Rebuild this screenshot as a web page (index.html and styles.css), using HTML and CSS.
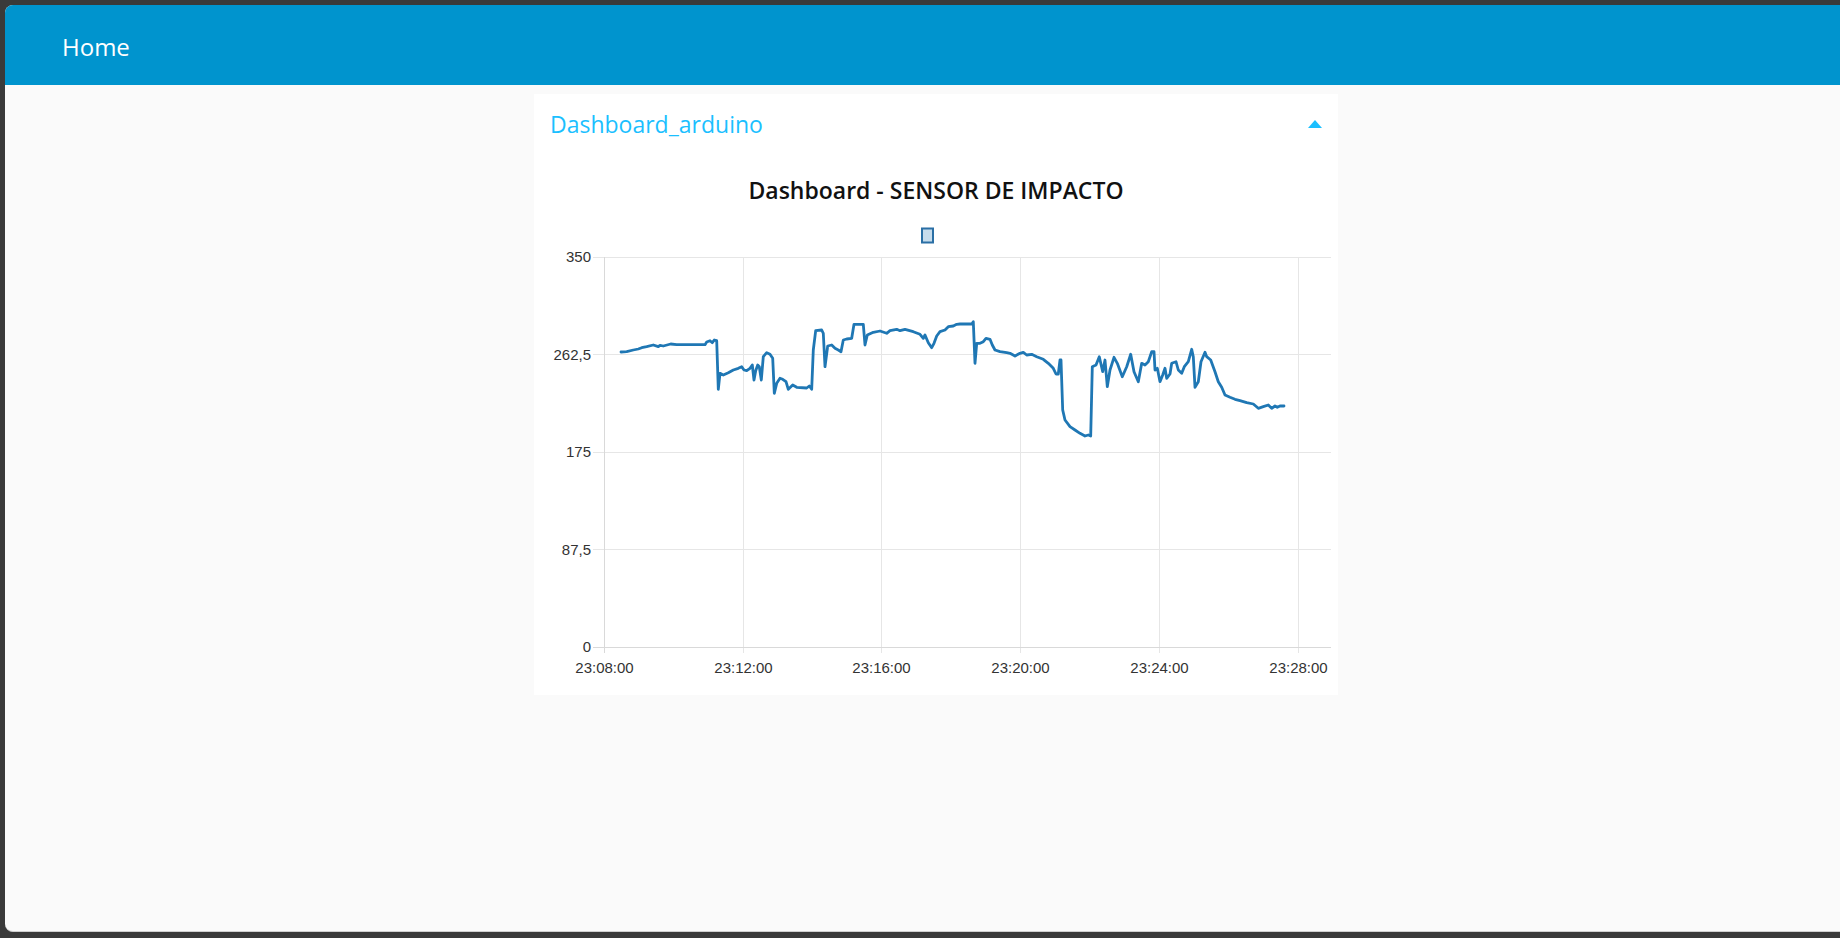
FILE: index.html
```html
<!DOCTYPE html>
<html lang="es">
<head>
<meta charset="utf-8">
<title>Node-RED Dashboard</title>
<link rel="stylesheet" href="styles.css">
</head>
<body>
<div class="window">
  <header class="toolbar"><h1 class="toolbar-title">Home</h1></header>
  <main class="content">
    <section class="card">
      <div class="card-head">
        <span class="card-title">Dashboard_arduino</span>
        <svg class="caret" width="14" height="8" viewBox="0 0 14 8"><polygon points="0,8 14,8 7,0" fill="#1bbfff"/></svg>
      </div>
      <div class="chart-title">Dashboard - SENSOR DE IMPACTO</div>
      <svg class="chart" width="804" height="491" viewBox="534 204 804 491">
        <rect x="922" y="228.5" width="11" height="14" fill="#c6dcec" stroke="#2a6fa5" stroke-width="2"/>
        <g stroke="#e6e6e6" stroke-width="1">
          <line x1="593" y1="257.5" x2="1331" y2="257.5"/>
          <line x1="593" y1="354.5" x2="1331" y2="354.5"/>
          <line x1="593" y1="452.5" x2="1331" y2="452.5"/>
          <line x1="593" y1="549.5" x2="1331" y2="549.5"/>
          <line x1="743.5" y1="257" x2="743.5" y2="653"/>
          <line x1="881.5" y1="257" x2="881.5" y2="653"/>
          <line x1="1020.5" y1="257" x2="1020.5" y2="653"/>
          <line x1="1159.5" y1="257" x2="1159.5" y2="653"/>
          <line x1="1298.5" y1="257" x2="1298.5" y2="653"/>
        </g>
        <g stroke="#d9d9d9" stroke-width="1">
          <line x1="604.5" y1="257" x2="604.5" y2="653"/>
          <line x1="593" y1="647.5" x2="1331" y2="647.5"/>
        </g>
        <g class="ylab" text-anchor="end">
          <text x="591" y="262">350</text>
          <text x="591" y="360">262,5</text>
          <text x="591" y="457">175</text>
          <text x="591" y="555">87,5</text>
          <text x="591" y="652">0</text>
        </g>
        <g class="xlab" text-anchor="middle">
          <text x="604.5" y="673">23:08:00</text>
          <text x="743.5" y="673">23:12:00</text>
          <text x="881.5" y="673">23:16:00</text>
          <text x="1020.5" y="673">23:20:00</text>
          <text x="1159.5" y="673">23:24:00</text>
          <text x="1298.5" y="673">23:28:00</text>
        </g>
        <polyline fill="none" stroke="#1f77b4" stroke-width="2.8" stroke-linejoin="round" stroke-linecap="round" points="621,352 626.7,351.7 633.3,350 638.3,349 641.7,347.7 646.7,346.7 653.3,345 658.3,346.7 660,345.3 663.3,346 670.7,344 676.7,344.7 705,344.7 706.7,342 710,340.7 712.3,342.7 714.3,340 716.7,340.7 718.3,389.3 720,373.3 723.3,375 728.3,372.7 733.3,370 738.3,368.3 741.7,366.7 744,370 746.7,370.7 750,368.3 752.3,365 754,380 755.7,370.7 757.7,365 759.3,366.7 761.3,380 763.3,356.7 766.7,352.7 770,354.3 772.7,358.3 774.3,393.3 776.7,383.3 780,378.3 782.7,379.3 786,381.7 788.3,389.3 792.7,385 796.7,387.3 806.7,388 809.3,386 811.7,389.3 813.3,350 815.7,330.7 821.7,330 823.3,333.3 825,366.7 827.7,346 831.7,345 835,348.3 838.3,350 841,351.7 843.3,340 846.7,339 851.7,338.3 854,324.3 863.3,324.3 865,345 867.3,335 873.3,332.3 880,331 886.7,333.3 890,330.7 896.7,329.3 900,330.7 905,329.3 913.3,331.7 920,334.3 923.3,338.3 925,335 928.3,342.7 931.7,347.7 934,343.3 936.7,336 940,331.7 945,330 948.3,326.7 953.3,326 956.7,324.3 960,324 971.7,324 973.3,321.7 975,363.3 976.7,343.3 980,343.3 983.3,341.7 986,338.3 990,339.3 992.3,345 995,350 1000,351.7 1006.7,352.7 1010,353.3 1015,356 1020,353.3 1023.3,352.3 1026.7,355 1031.7,354.3 1036.7,356.7 1043.3,359.3 1048.3,363.3 1053.3,368.3 1056,374 1058.3,374 1060,360 1061,360 1062.7,410 1065,420 1070,426.7 1075,430 1080,433.3 1085,436 1088.3,435 1090.7,436 1092.3,366.7 1096,365 1099.3,356.7 1102.7,371.7 1105,360 1107.3,386.7 1110,370 1114,357.3 1117.3,363.3 1122.3,376.7 1126.7,366.7 1130.7,354.3 1134,371.7 1138.3,381.7 1141.7,363.3 1145,365 1148.3,361.7 1151.7,351.7 1154,351.7 1155,370 1157.3,368.3 1160,381.7 1162.7,375 1165,368.3 1166.7,378.3 1170,374 1171.7,363.3 1176,361.7 1178.3,370 1181.7,373.3 1184.3,366.7 1188.3,361.7 1191.7,349.3 1193.3,356.7 1195,387.3 1198.3,381.7 1201,361.7 1205,352.3 1206.7,356.7 1210.7,360 1215,371.7 1218.3,381.7 1221.7,387.3 1225,395 1230,397.3 1235,399.3 1240,400.7 1246.7,402.7 1253.3,404 1258.3,408.3 1263.3,406.7 1268.3,405 1271.7,408.3 1275,406 1277.3,407.3 1280,406 1284,406"/>
      </svg>
    </section>
  </main>
</div>
</body>
</html>
```

FILE: styles.css
```css
html, body {
  margin: 0;
  padding: 0;
  width: 1840px;
  height: 938px;
  overflow: hidden;
  background: #3a3a3a;
}

.window {
  margin: 5px 0 0 5px;
  height: 926px;
  background: #fafafa;
  border-radius: 8px 0 0 8px;
  border-bottom: 1px solid #cfcfcf;
  overflow: hidden;
  font-family: "Open Sans", "Noto Sans", sans-serif;
}

.toolbar {
  height: 80px;
  background: #0094ce;
  display: flex;
  align-items: center;
  padding-left: 57px;
}

.toolbar-title {
  margin: 0;
  font-size: 24px;
  font-weight: 400;
  color: #ffffff;
  line-height: 1;
  padding-top: 3px;
}

.content {
  padding: 9px 0 0 529px;
}

.card {
  width: 804px;
  height: 601px;
  background: #ffffff;
  display: flex;
  flex-direction: column;
}

.card-head {
  height: 58px;
  display: flex;
  align-items: center;
  justify-content: space-between;
  padding: 0 16px;
}

.card-title {
  font-size: 23px;
  color: #1bbfff;
  line-height: 1;
  padding-top: 2px;
}

.caret {
  display: block;
  margin-top: 2px;
}

.chart-title {
  margin-top: 24px;
  height: 28px;
  line-height: 28px;
  text-align: center;
  font-size: 23px;
  font-weight: 600;
  color: #111111;
}

.chart {
  display: block;
}

.ylab text, .xlab text {
  font-family: "Liberation Sans", Arial, sans-serif;
  font-size: 15px;
  fill: #333333;
}
```
